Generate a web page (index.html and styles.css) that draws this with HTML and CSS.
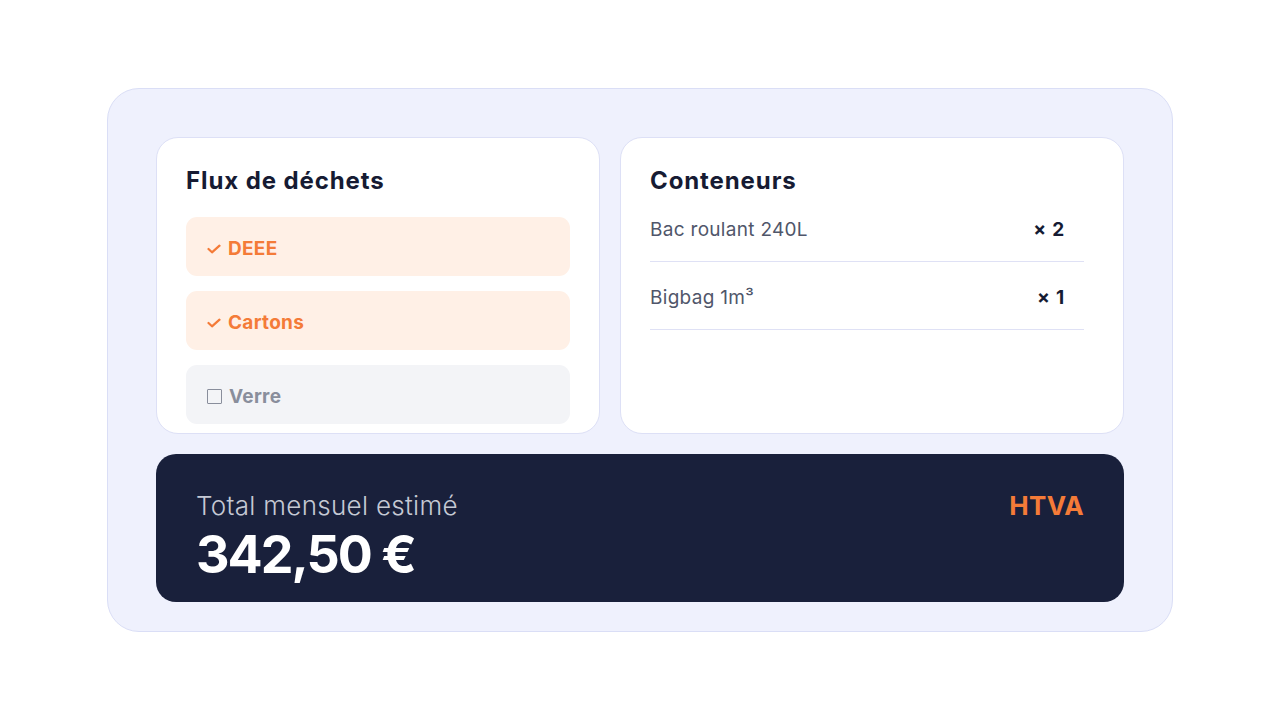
FILE: index.html
```html
<!DOCTYPE html>
<html lang="fr">
<head>
<meta charset="utf-8">
<title>Estimation mensuelle</title>
<link rel="stylesheet" href="styles.css">
</head>
<body>
<main class="panel">
  <div class="cards">
    <section class="card">
      <h2 class="card-title">Flux de déchets</h2>
      <ul class="flux-list">
        <li class="flux flux-on">
          <svg class="check" viewBox="0 0 14 10" width="14" height="10"><path d="M1.5 5 L5 8.3 L12.5 1.7" fill="none" stroke="currentColor" stroke-width="2.2" stroke-linecap="round" stroke-linejoin="round"/></svg>
          DEEE
        </li>
        <li class="flux flux-on">
          <svg class="check" viewBox="0 0 14 10" width="14" height="10"><path d="M1.5 5 L5 8.3 L12.5 1.7" fill="none" stroke="currentColor" stroke-width="2.2" stroke-linecap="round" stroke-linejoin="round"/></svg>
          Cartons
        </li>
        <li class="flux flux-off">
          <span class="box"></span>
          Verre
        </li>
      </ul>
    </section>
    <section class="card">
      <h2 class="card-title">Conteneurs</h2>
      <div class="row"><span class="row-name">Bac roulant 240L</span><span class="row-qty">× 2</span></div>
      <div class="row"><span class="row-name">Bigbag 1m³</span><span class="row-qty">× 1</span></div>
    </section>
  </div>
  <section class="total">
    <div class="total-text">
      <div class="total-label">Total mensuel estimé</div>
      <div class="total-value">342,50 €</div>
    </div>
    <div class="total-tag">HTVA</div>
  </section>
</main>
</body>
</html>
```
FILE: styles.css
```css
* { box-sizing: border-box; }

html, body {
  margin: 0;
  height: 100%;
  background: #ffffff;
  font-family: Inter, "Noto Sans", sans-serif;
}

body {
  display: flex;
  align-items: center;
  justify-content: center;
}

.panel {
  width: 1066px;
  height: 544px;
  background: #eff1fd;
  border: 1px solid #dadef6;
  border-radius: 32px;
  padding: 48px 48px 29px;
  display: flex;
  flex-direction: column;
  gap: 20px;
}

.cards {
  display: grid;
  grid-template-columns: 444px 1fr;
  gap: 20px;
  height: 297px;
  flex: none;
}

.card {
  background: #ffffff;
  border: 1px solid #dde0f6;
  border-radius: 22px;
  padding: 29px 29px 10px;
  overflow: hidden;
}

.card-title {
  margin: 0;
  font-size: 24px;
  line-height: 27px;
  font-weight: 700;
  color: #161b33;
  letter-spacing: 0.9px;
}

.flux-list {
  list-style: none;
  margin: 23px 0 0;
  padding: 0;
  display: flex;
  flex-direction: column;
  gap: 15px;
}

.flux {
  height: 59px;
  border-radius: 11px;
  padding: 4px 21px 0;
  display: flex;
  align-items: center;
  gap: 7px;
  font-size: 19px;
  font-weight: 700;
  letter-spacing: 0.3px;
}

.flux-on {
  background: #fff0e6;
  color: #f47b38;
}

.flux-off {
  background: #f3f4f7;
  color: #898e9c;
}

.check { flex: none; margin-top: 1px; }

.box {
  width: 15px;
  height: 15px;
  border: 1.5px solid #898e9c;
  border-radius: 1px;
  flex: none;
}

.row {
  display: flex;
  justify-content: space-between;
  align-items: center;
  width: 434px;
  padding: 23px 19px 18px 0;
  border-bottom: 1px solid #dfe1f5;
  font-size: 19px;
  line-height: 26px;
  letter-spacing: 0.3px;
}

.row-name { color: #50566a; }

.row-qty {
  color: #161b33;
  font-weight: 700;
  letter-spacing: 0.8px;
}

.total {
  flex: 1;
  min-height: 0;
  background: #19203b;
  border-radius: 20px;
  padding: 36px 40px 0;
  display: flex;
  justify-content: space-between;
  align-items: flex-start;
}

.total-label {
  color: #c5c9d4;
  font-size: 26px;
  line-height: 32px;
  font-weight: 300;
  letter-spacing: 0.3px;
}

.total-value {
  margin-top: 4px;
  color: #ffffff;
  font-size: 52px;
  line-height: 58px;
  font-weight: 700;
  letter-spacing: -2px;
}

.total-tag {
  color: #f47b38;
  font-size: 26px;
  line-height: 32px;
  font-weight: 700;
  letter-spacing: 0.3px;
}
```
